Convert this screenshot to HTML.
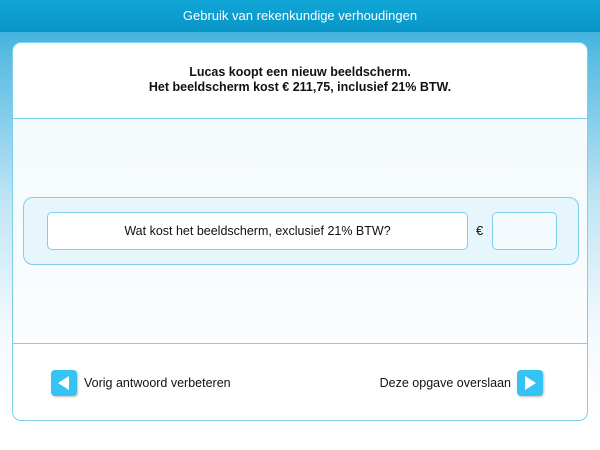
<!DOCTYPE html>
<html><head><meta charset="utf-8"><style>
*{margin:0;padding:0;box-sizing:border-box}
body{width:600px;height:450px;position:relative;overflow:hidden;font-family:"Liberation Sans",sans-serif;background:linear-gradient(180deg,#27a9d8 0px,#5cbde3 60px,#bfe5f4 200px,#f2f9fd 330px,#fff 420px)}
.hdr{position:absolute;left:0;top:0;width:600px;height:32px;background:linear-gradient(#10a6d6,#0895c6);color:#fff;font-size:13px;text-align:center;line-height:31px}
.card{position:absolute;left:12px;top:42px;width:576px;height:379px;background:#fff;border:1px solid #7ccfee;border-radius:9px;overflow:hidden}
.top{height:76px;border-bottom:1px solid #7ccfee;text-align:center;font-weight:bold;font-size:12.5px;color:#111;padding-top:22px;line-height:15px}
.mid{position:absolute;top:76px;left:0;width:100%;height:225px;background:linear-gradient(#f4fafd,#fbfdfe);border-bottom:1px solid #7ccfee}
.inner{position:absolute;left:10px;top:154px;width:556px;height:68px;background:#e7f5fc;border:1px solid #7ccfee;border-radius:10px}
.q{position:absolute;left:23px;top:14px;width:421px;height:38px;background:#fff;border:1px solid #7ccfee;border-radius:5px;text-align:center;line-height:36px;font-size:12.5px;color:#111}
.eur{position:absolute;left:452px;top:25px;font-size:13px;color:#111}
.a{position:absolute;left:468px;top:14px;width:65px;height:38px;background:#f4fbfe;border:1px solid #7ccfee;border-radius:5px}
.btn{position:absolute;top:327px;width:26px;height:26px;background:#35c3f3;border-radius:4px;box-shadow:1px 1px 2px rgba(0,0,0,.25)}
.lbl{position:absolute;top:333px;font-size:12.5px;color:#111}
</style></head><body>
<div class="hdr">Gebruik van rekenkundige verhoudingen</div>
<div class="card">
<div class="top">Lucas koopt een nieuw beeldscherm.<br>Het beeldscherm kost € 211,75, inclusief 21% BTW.</div>
<div class="mid"></div>
<div class="inner"><div class="q">Wat kost het beeldscherm, exclusief 21% BTW?</div><div class="eur">€</div><div class="a"></div></div>
<div class="btn" style="left:38px"><svg width="26" height="26"><polygon points="7,13 18,6 18,20" fill="#fff"/></svg></div>
<div class="lbl" style="left:71px">Vorig antwoord verbeteren</div>
<div class="lbl" style="right:76px">Deze opgave overslaan</div>
<div class="btn" style="left:504px"><svg width="26" height="26"><polygon points="19,13 8,6 8,20" fill="#fff"/></svg></div>
</div>
</body></html>
